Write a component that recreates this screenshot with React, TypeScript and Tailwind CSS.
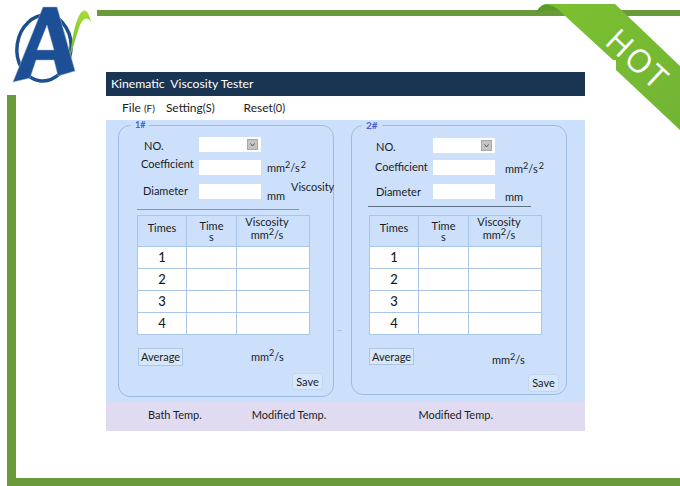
import React from 'react';

const cellBorder = 'border border-[#a9c5e8]';

const Unit: React.FC<{ squared?: boolean }> = ({ squared }) => (
  <span>
    mm<sup className="text-[9px]">2</sup>/s{squared && <sup className="text-[9px] ml-[1px]">2</sup>}
  </span>
);

const Logo = () => (
  <svg className="absolute left-0 top-0" width="100" height="95" viewBox="0 0 100 95">
    <defs>
      <linearGradient id="swoosh" x1="0" y1="0" x2="0" y2="1">
        <stop offset="0" stopColor="#a5dc3a" />
        <stop offset="1" stopColor="#6fb52a" />
      </linearGradient>
    </defs>
    <ellipse cx="44" cy="48" rx="27" ry="33" fill="none" stroke="#1d4f8f" strokeWidth="3.5" transform="rotate(8 44 48)" />
    <path d="M69 60 C72 42 74 24 80 14 C84 8 88 9 91 22 C87 16 83 18 80 25 C76 36 73 48 69 60Z" fill="url(#swoosh)" />
    <path
      fillRule="evenodd"
      d="M43 7 L57 7 L75 71 L58 76 L54 60 L36 60 L30 78 L13 82 Z M47 25 L37 50 L54 50 Z"
      fill="#1c4f96"
      stroke="#9fb0c4"
      strokeWidth="0.5"
    />
  </svg>
);

const Ribbon = () => (
  <>
    <svg className="absolute left-[530px] top-0" width="150" height="135" viewBox="530 0 150 135">
      <defs>
        <linearGradient id="band" x1="0" y1="0" x2="1" y2="1">
          <stop offset="0" stopColor="#7cc030" />
          <stop offset="1" stopColor="#72b536" />
        </linearGradient>
      </defs>
      <path d="M536 13 C538 8 542 4 547 4 L560 4 L566 12 C556 9 546 10 536 13Z" fill="#5c9a2c" />
      <path d="M545 4 L615 4 L680 66 L680 130 L616 70 L616 60 L613 60 L563 14 C558 8 552 5 545 4Z" fill="url(#band)" />
    </svg>
    <span className="absolute left-[601px] top-[42px] w-[74px] text-center text-[32px] leading-[34px] tracking-[2px] font-normal whitespace-nowrap text-white rotate-[43deg] font-['Open_Sans',sans-serif]">
      HOT
    </span>
  </>
);

const Field: React.FC<{ label: string; labelClass: string; rowClass: string; unit?: React.ReactNode; unitClass?: string; children: React.ReactNode }> = ({
  label,
  labelClass,
  rowClass,
  unit,
  unitClass,
  children,
}) => (
  <div className={`flex items-center ${rowClass}`}>
    <div className="w-[58px] shrink-0">
      <span className={`block leading-[14px] ${labelClass}`}>{label}</span>
    </div>
    {children}
    {unit && <span className={`ml-[6px] leading-[14px] whitespace-nowrap ${unitClass}`}>{unit}</span>}
  </div>
);

const TextBox = () => <div className="w-[62px] h-[15px] bg-white" />;

const SelectBox = () => (
  <div className="w-[62px] h-[15px] bg-white flex items-center justify-end pr-[3px]">
    <div className="w-[11px] h-[11px] bg-[#c4c4c4] border border-[#a8a8a8] flex items-center justify-center">
      <svg width="5" height="4" viewBox="0 0 5 4">
        <path d="M0.5 0.5 L2.5 3 L4.5 0.5" fill="none" stroke="#555" strokeWidth="1" />
      </svg>
    </div>
  </div>
);

const Readings: React.FC<{ className: string }> = ({ className }) => (
  <table className={`border-collapse table-fixed w-[172px] ${className}`}>
    <colgroup>
      <col className="w-[49px]" />
      <col className="w-[50px]" />
      <col className="w-[73px]" />
    </colgroup>
    <thead>
      <tr className="h-[31px] text-center">
        <th className={`font-normal pb-[5px] ${cellBorder}`}>Times</th>
        <th className={`font-normal leading-[11px] ${cellBorder}`}>
          Time
          <br />s
        </th>
        <th className={`font-normal pr-[12px] pb-[5px] ${cellBorder}`}>
          <span className="block leading-[11px] whitespace-nowrap">Viscosity</span>
          <span className="block leading-[12px] mt-[2px] whitespace-nowrap">
            <Unit />
          </span>
        </th>
      </tr>
    </thead>
    <tbody>
      {[1, 2, 3, 4].map((n) => (
        <tr key={n} className="h-[22px] bg-white">
          <td className={`text-center text-[13px] font-medium ${cellBorder}`}>{n}</td>
          <td className={cellBorder} />
          <td className={cellBorder} />
        </tr>
      ))}
    </tbody>
  </table>
);

const Panel1 = () => (
  <section className="relative w-[216px] h-[272px] border border-[#9dbbe0] rounded-[12px] pl-[22px] text-[#1c1c1c]">
    <span className="absolute left-[12px] -top-[6px] px-[4px] bg-[#cce0fb] text-[9px] leading-[10px] font-bold text-[#4a5fd0]">1#</span>
    <Field label="NO." labelClass="ml-[3px] mt-[2px]" rowClass="mt-[11px] h-[15px]">
      <SelectBox />
    </Field>
    <Field label="Coefficient" labelClass="mb-[6px]" rowClass="mt-[7px] h-[16px]" unit={<Unit squared />} unitClass="mt-[2px]">
      <TextBox />
    </Field>
    <Field label="Diameter" labelClass="ml-[2px] mb-[1px]" rowClass="mt-[9px] h-[15px]" unit="mm" unitClass="mt-[8px]">
      <TextBox />
    </Field>
    <div className="mt-[10px] ml-[-4px] w-[162px] h-[1px] bg-[#8596ab]" />
    <Readings className="mt-[5px] ml-[-4px]" />
    <div className="flex items-center mt-[13px] ml-[-3px]">
      <button className="w-[45px] h-[18px] bg-[#d6e6fb] border border-[#a9c5e8]">Average</button>
      <span className="ml-[68px]">
        <Unit />
      </span>
    </div>
    <div className="flex justify-end mt-[7px] pr-[10px]">
      <button className="w-[31px] h-[17px] bg-[#d6e6fb] border border-[#c2d6f0] rounded-[3px]">Save</button>
    </div>
    <span className="absolute left-[172px] top-[54px] leading-[14px] whitespace-nowrap">Viscosity</span>
    <span className="absolute left-[218px] top-[204px] w-[5px] h-[1px] bg-[#a9c5e8]" />
  </section>
);

const Panel2 = () => (
  <section className="relative w-[216px] h-[270px] ml-[17px] border border-[#9dbbe0] rounded-[12px] pl-[23px] text-[#1c1c1c]">
    <span className="absolute left-[10px] -top-[6px] px-[4px] bg-[#cce0fb] text-[10px] leading-[10px] font-bold text-[#4a5fd0]">2#</span>
    <Field label="NO." labelClass="ml-[1px] mt-[3px]" rowClass="mt-[12px] h-[15px]">
      <SelectBox />
    </Field>
    <Field label="Coefficient" labelClass="mb-[2px]" rowClass="mt-[7px] h-[15px]" unit={<Unit squared />} unitClass="ml-[10px] mt-[3px]">
      <TextBox />
    </Field>
    <Field label="Diameter" labelClass="ml-[1px] mt-[1px]" rowClass="mt-[9px] h-[15px]" unit="mm" unitClass="ml-[10px] mt-[11px]">
      <TextBox />
    </Field>
    <div className="mt-[7px] ml-[-7px] w-[163px] h-[1px] bg-[#5f7187]" />
    <Readings className="mt-[8px] ml-[-6px]" />
    <div className="flex items-start mt-[13px] ml-[-6px]">
      <button className="w-[45px] h-[17px] bg-[#d6e6fb] border border-[#a9c5e8]">Average</button>
      <span className="ml-[78px] mt-[5px] leading-[14px]">
        <Unit />
      </span>
    </div>
    <div className="flex justify-end mt-[7px] pr-[7px]">
      <button className="w-[31px] h-[18px] bg-[#d6e6fb] border border-[#c2d6f0] rounded-[3px]">Save</button>
    </div>
  </section>
);

export default function App() {
  return (
    <div className="relative w-[680px] h-[486px] overflow-hidden bg-white flex flex-col text-[11px] text-[#1c1c1c] font-['Lato',sans-serif]">
      <header className="h-[72px] shrink-0 pl-[97px] pt-[10px]">
        <div className="h-[6px] bg-[#6b9a3c]" />
      </header>

      <div className="flex-1 flex pl-[7px] min-h-0">
        <div className="w-[9px] mt-[23px] bg-[#6b9a3c]" />
        <main className="ml-[90px] w-[479px] h-[359px] flex flex-col">
          <div className="h-[24px] bg-[#1a3552] text-white text-[12.2px] leading-[24px] pl-[5px] whitespace-pre">Kinematic  Viscosity Tester</div>
          <nav className="h-[24px] flex items-center text-[12px] bg-white">
            <span className="ml-[16px]">
              File <span className="text-[10px]">(F)</span>
            </span>
            <span className="ml-[11px]">
              Setting<span className="text-[11px]">(S)</span>
            </span>
            <span className="ml-[29px]">
              Reset<span className="text-[11px]">(0)</span>
            </span>
          </nav>
          <div className="flex-1 bg-[#cce0fb] flex items-start pl-[12px] pt-[5px]">
            <Panel1 />
            <Panel2 />
          </div>
          <footer className="h-[29px] pb-[3px] bg-[#e0dbf0] flex items-center">
            <span className="ml-[42px]">Bath Temp.</span>
            <span className="ml-[50px]">Modified Temp.</span>
            <span className="ml-[92px]">Modified Temp.</span>
          </footer>
        </main>
      </div>

      <div className="h-[8px] shrink-0 ml-[7px] bg-[#6b9a3c]" />
      <Logo />
      <Ribbon />
    </div>
  );
}
